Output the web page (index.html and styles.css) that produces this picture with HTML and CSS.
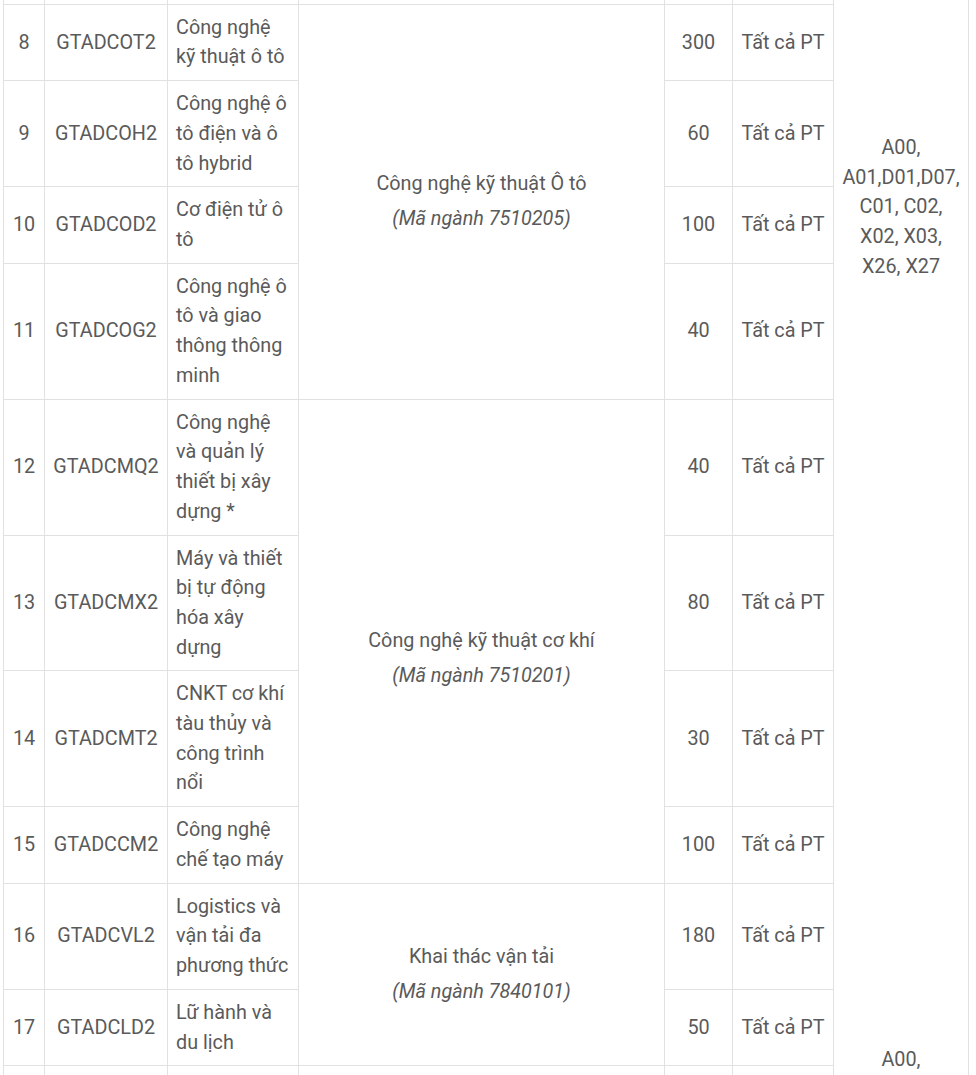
FILE: index.html
```html
<!DOCTYPE html>
<html lang="vi">
<head>
<meta charset="utf-8">
<title>Chỉ tiêu tuyển sinh</title>
<link rel="stylesheet" href="styles.css">
</head>
<body>
<table class="tbl">
  <colgroup>
    <col class="w-stt"><col class="w-code"><col class="w-name"><col class="w-major"><col class="w-qty"><col class="w-method"><col class="w-combo">
  </colgroup>
  <tbody>
    <tr class="row-prev">
      <td class="c">&nbsp;</td><td class="c">&nbsp;</td><td>&nbsp;</td><td class="c">&nbsp;</td><td class="c">&nbsp;</td><td class="c">&nbsp;</td>
      <td class="combo" rowspan="12">
        <div class="combo-a">A00,<br>A01,D01,D07,<br>C01, C02,<br>X02, X03,<br>X26, X27</div>
        <div class="combo-b">A00,<br>A01,D01,D07,<br>C01, C02</div>
      </td>
    </tr>
    <tr>
      <td class="c">8</td><td class="c">GTADCOT2</td><td>Công nghệ kỹ thuật ô tô</td>
      <td class="c major" rowspan="4"><div class="m-name">Công nghệ kỹ thuật Ô tô</div><div class="m-code">(Mã ngành 7510205)</div></td>
      <td class="c">300</td><td class="c">Tất cả PT</td>
    </tr>
    <tr>
      <td class="c">9</td><td class="c">GTADCOH2</td><td>Công nghệ ô tô điện và ô tô hybrid</td>
      <td class="c">60</td><td class="c">Tất cả PT</td>
    </tr>
    <tr>
      <td class="c">10</td><td class="c">GTADCOD2</td><td>Cơ điện tử ô tô</td>
      <td class="c">100</td><td class="c">Tất cả PT</td>
    </tr>
    <tr>
      <td class="c">11</td><td class="c">GTADCOG2</td><td>Công nghệ ô tô và giao thông thông minh</td>
      <td class="c">40</td><td class="c">Tất cả PT</td>
    </tr>
    <tr>
      <td class="c">12</td><td class="c">GTADCMQ2</td><td>Công nghệ và quản lý thiết bị xây dựng *</td>
      <td class="c major" rowspan="4"><div class="m-blank">&nbsp;</div><div class="m-name">Công nghệ kỹ thuật cơ khí</div><div class="m-code">(Mã ngành 7510201)</div></td>
      <td class="c">40</td><td class="c">Tất cả PT</td>
    </tr>
    <tr>
      <td class="c">13</td><td class="c">GTADCMX2</td><td>Máy và thiết bị tự động hóa xây dựng</td>
      <td class="c">80</td><td class="c">Tất cả PT</td>
    </tr>
    <tr>
      <td class="c">14</td><td class="c">GTADCMT2</td><td>CNKT cơ khí tàu thủy và công trình nổi</td>
      <td class="c">30</td><td class="c">Tất cả PT</td>
    </tr>
    <tr>
      <td class="c">15</td><td class="c">GTADCCM2</td><td>Công nghệ chế tạo máy</td>
      <td class="c">100</td><td class="c">Tất cả PT</td>
    </tr>
    <tr>
      <td class="c">16</td><td class="c">GTADCVL2</td><td>Logistics và vận tải đa phương thức</td>
      <td class="c major" rowspan="2"><div class="m-name">Khai thác vận tải</div><div class="m-code">(Mã ngành 7840101)</div></td>
      <td class="c">180</td><td class="c">Tất cả PT</td>
    </tr>
    <tr>
      <td class="c">17</td><td class="c">GTADCLD2</td><td>Lữ hành và du lịch</td>
      <td class="c">50</td><td class="c">Tất cả PT</td>
    </tr>
    <tr class="row-next">
      <td class="c">&nbsp;</td><td class="c">&nbsp;</td><td>&nbsp;<br>&nbsp;</td><td class="c">&nbsp;</td><td class="c">&nbsp;</td><td class="c">&nbsp;</td>
    </tr>
  </tbody>
</table>
</body>
</html>
```

FILE: styles.css
```css
html, body {
  margin: 0;
  padding: 0;
  background: #ffffff;
}

body {
  overflow: hidden;
}

.tbl {
  border-collapse: collapse;
  table-layout: fixed;
  width: 966px;
  margin: -43px 0 0 3px;
  font-family: Roboto, "Noto Sans", Arial, sans-serif;
  font-size: 19.8px;
  line-height: 29.7px;
  color: #5a5a5a;
}

.w-stt { width: 41px; }
.w-code { width: 123px; }
.w-name { width: 131px; }
.w-major { width: 366px; }
.w-qty { width: 68px; }
.w-method { width: 101px; }
.w-combo { width: 135px; }

.tbl td {
  border: 1px solid #e1e1e1;
  padding: 8px;
  vertical-align: middle;
  text-align: left;
}

.tbl td.c {
  text-align: center;
}

.major .m-code {
  font-style: italic;
  margin-top: 5px;
}

.major .m-blank {
  margin-bottom: 5px;
}

.tbl td.combo {
  vertical-align: top;
  text-align: center;
  padding: 8px 4px;
}

.combo-a {
  margin-top: 167px;
}

.combo-b {
  margin-top: 763px;
}
```
